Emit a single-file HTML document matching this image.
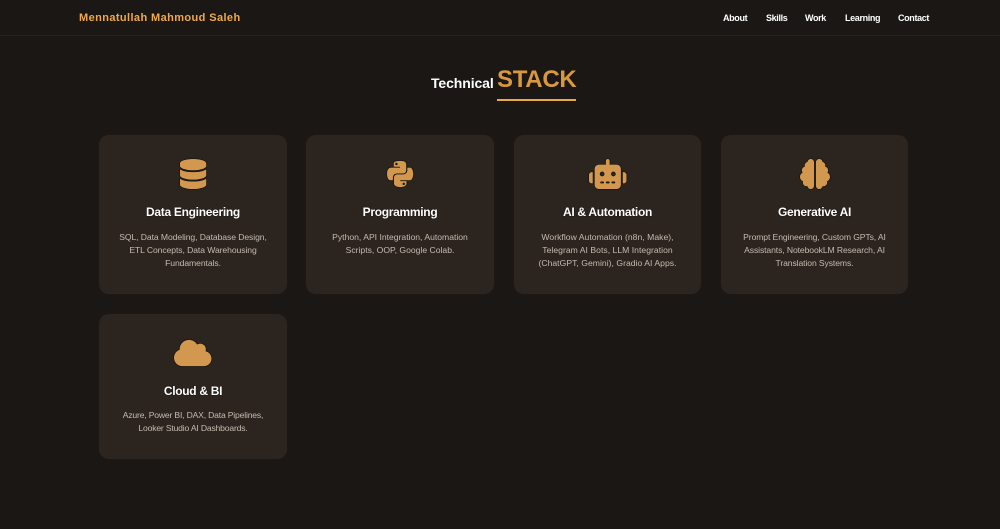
<!DOCTYPE html>
<html><head><meta charset="utf-8"><title>Technical Stack</title>
<style>
*{box-sizing:border-box;margin:0;padding:0}
html,body{width:1000px;height:529px;overflow:hidden;background:#1a1714;font-family:"Liberation Sans",sans-serif}
.nav{position:absolute;left:0;top:0;width:1000px;height:36px;border-bottom:1px solid #272320}
.logo{position:absolute;left:79px;top:11px;font-size:11px;line-height:14px;font-weight:700;color:#f0a94a;letter-spacing:.4px;white-space:nowrap}
.nav a{position:absolute;top:12px;font-size:9px;line-height:12px;font-weight:700;color:#fff;letter-spacing:-.35px;white-space:nowrap}
.t1{position:absolute;left:431px;top:74px;font-size:14px;line-height:18px;font-weight:700;color:#fff;letter-spacing:-.1px;white-space:nowrap}
.t2{position:absolute;left:497px;top:65px;font-size:24px;line-height:29px;font-weight:700;color:#d9983f;letter-spacing:-.3px;white-space:nowrap}
.ul{position:absolute;left:497px;top:98.500px;width:79px;height:2px;background:#eba84c}
.card{position:absolute;width:188px;background:#2c241e;border-radius:10px;box-shadow:0 0 1px rgba(255,255,255,.06)}
.card svg{position:absolute;top:24px;height:30px;overflow:visible}
.card svg path{fill:#d3984f;stroke:#111;stroke-width:22;paint-order:stroke;stroke-linejoin:round}
.card h3{position:absolute;left:0;top:69px;width:100%;text-align:center;font-size:12px;line-height:16px;font-weight:700;color:#fff;letter-spacing:-.3px;white-space:nowrap;text-shadow:0 0 1px #000}
.card p{position:absolute;left:0;top:96px;width:100%;text-align:center;font-size:8.600px;line-height:13px;color:#c5bbb0;white-space:nowrap}
</style></head><body>
<div class="nav">
<div class="logo">Mennatullah Mahmoud Saleh</div>
<a style="left:723px">About</a><a style="left:766px">Skills</a><a style="left:805px">Work</a><a style="left:845px">Learning</a><a style="left:898px">Contact</a>
</div>
<div class="t1">Technical</div><div class="t2">STACK</div><div class="ul"></div>

<div class="card" style="left:99px;top:135px;height:159px">
<svg style="left:80.900px" width="26.250" viewBox="0 0 448 512"><path d="M448 73.120v45.750C448 159.200 347.700 192 224 192S0 159.200 0 118.900V73.120C0 32.800 100.300 0 224 0s224 32.800 224 73.120zM448 176v102.900C448 319.200 347.700 352 224 352S0 319.200 0 278.900V176c48.100 33.100 136.200 48.600 224 48.600S399.900 209.100 448 176zM448 336v102.900C448 479.200 347.700 512 224 512S0 479.200 0 438.900V336c48.100 33.100 136.200 48.600 224 48.600S399.900 369.100 448 336z"/></svg>
<h3>Data Engineering</h3>
<p style="letter-spacing:-.08px">SQL, Data Modeling, Database Design,<br>ETL Concepts, Data Warehousing<br>Fundamentals.</p>
</div>

<div class="card" style="left:306px;top:135px;height:159px">
<svg style="left:80.900px" width="26.250" viewBox="0 0 448 512"><path d="M439.800 200.500c-7.700-30.900-22.300-54.200-53.400-54.200h-40.100v47.400c0 36.800-31.200 67.800-66.800 67.800H172.700c-29.200 0-53.400 25-53.400 54.300v101.800c0 29 25.200 46 53.400 54.300 33.800 9.900 66.300 11.700 106.800 0 26.900-7.800 53.400-23.500 53.400-54.300v-40.700H226.200v-13.600h160.200c31.100 0 42.600-21.700 53.400-54.200 11.200-33.500 10.700-65.700 0-108.600zM286.200 404c11.100 0 20.100 9.100 20.100 20.300 0 11.300-9 20.400-20.100 20.400-11 0-20.100-9.200-20.100-20.400.1-11.300 9.100-20.300 20.100-20.300zM167.800 248.100h106.800c29.700 0 53.400-24.500 53.400-54.300V91.900c0-29-24.400-50.700-53.400-55.600-35.800-5.900-74.700-5.600-106.800.1-45.200 8-53.400 24.700-53.400 55.600v40.700h106.900v13.600h-147c-31.100 0-58.300 18.700-66.800 54.200-9.800 40.700-10.200 66.100 0 108.600 7.600 31.600 25.700 54.200 56.800 54.200H101v-48.800c0-35.300 30.500-66.400 66.800-66.400zm-6.700-142.600c-11.100 0-20.100-9.100-20.100-20.300.1-11.300 9-20.400 20.100-20.400 11 0 20.100 9.200 20.100 20.400s-9 20.300-20.100 20.300z"/></svg>
<h3>Programming</h3>
<p>Python, API Integration, Automation<br>Scripts, OOP, Google Colab.</p>
</div>

<div class="card" style="left:514px;top:135px;height:159px;width:187px">
<svg style="left:74.750px" width="37.500" viewBox="0 0 640 512"><path d="M320 0c17.700 0 32 14.300 32 32V96H472c39.800 0 72 32.200 72 72V440c0 39.800-32.200 72-72 72H168c-39.800 0-72-32.200-72-72V168c0-39.800 32.200-72 72-72H288V32c0-17.700 14.300-32 32-32zM208 384c-8.800 0-16 7.200-16 16s7.200 16 16 16h32c8.800 0 16-7.200 16-16s-7.200-16-16-16H208zm96 0c-8.800 0-16 7.200-16 16s7.200 16 16 16h32c8.800 0 16-7.200 16-16s-7.200-16-16-16H304zm96 0c-8.800 0-16 7.200-16 16s7.200 16 16 16h32c8.800 0 16-7.200 16-16s-7.200-16-16-16H400zM264 256a40 40 0 1 0 -80 0 40 40 0 1 0 80 0zm152 40a40 40 0 1 0 0-80 40 40 0 1 0 0 80zM48 224H64V416H48c-26.500 0-48-21.500-48-48V272c0-26.500 21.500-48 48-48zm544 0c26.500 0 48 21.500 48 48v96c0 26.500-21.500 48-48 48H576V224h16z"/></svg>
<h3>AI &amp; Automation</h3>
<p style="letter-spacing:.03px">Workflow Automation (n8n, Make),<br>Telegram AI Bots, LLM Integration<br>(ChatGPT, Gemini), Gradio AI Apps.</p>
</div>

<div class="card" style="left:721px;top:135px;height:159px;width:187px">
<svg style="left:78.500px" width="30" viewBox="0 0 512 512"><path d="M184 0c30.900 0 56 25.100 56 56V456c0 30.900-25.100 56-56 56c-28.900 0-52.700-21.900-55.700-50.100c-5.200 1.400-10.700 2.100-16.300 2.100c-35.300 0-64-28.700-64-64c0-7.400 1.300-14.600 3.600-21.200C21.400 367.400 0 338.200 0 304c0-31.900 18.700-59.500 45.800-72.300C37.100 220.800 32 207 32 192c0-30.700 21.600-56.300 50.400-62.600C80.800 123.900 80 118 80 112c0-29.900 20.600-55.100 48.300-62.100C131.300 21.900 155.100 0 184 0zM328 0c28.900 0 52.600 21.900 55.700 49.900c27.800 7 48.300 32.100 48.300 62.100c0 6-.8 11.900-2.400 17.400c28.800 6.200 50.400 31.900 50.400 62.600c0 15-5.100 28.800-13.800 39.700C493.300 244.500 512 272.100 512 304c0 34.200-21.400 63.400-51.600 74.800c2.300 6.600 3.600 13.800 3.600 21.200c0 35.300-28.700 64-64 64c-5.600 0-11.100-.7-16.300-2.100c-3 28.200-26.800 50.100-55.700 50.100c-30.900 0-56-25.100-56-56V56c0-30.900 25.100-56 56-56z"/></svg>
<h3>Generative AI</h3>
<p style="letter-spacing:-.1px">Prompt Engineering, Custom GPTs, AI<br>Assistants, NotebookLM Research, AI<br>Translation Systems.</p>
</div>

<div class="card" style="left:99px;top:314px;height:145px">
<svg style="left:75.250px" width="37.500" viewBox="0 0 640 512"><path d="M0 336c0 79.500 64.500 144 144 144H512c70.700 0 128-57.300 128-128c0-61.900-44-113.600-102.400-125.400c4.100-10.700 6.400-22.400 6.400-34.600c0-53-43-96-96-96c-19.700 0-38.100 6-53.300 16.200C367 64.200 315.300 32 256 32C167.600 32 96 103.600 96 192c0 2.700 .1 5.400 .2 8.100C40.200 219.800 0 273.200 0 336z"/></svg>
<h3>Cloud &amp; BI</h3>
<p style="top:95px;letter-spacing:-.18px">Azure, Power BI, DAX, Data Pipelines,<br>Looker Studio AI Dashboards.</p>
</div>
</body></html>
